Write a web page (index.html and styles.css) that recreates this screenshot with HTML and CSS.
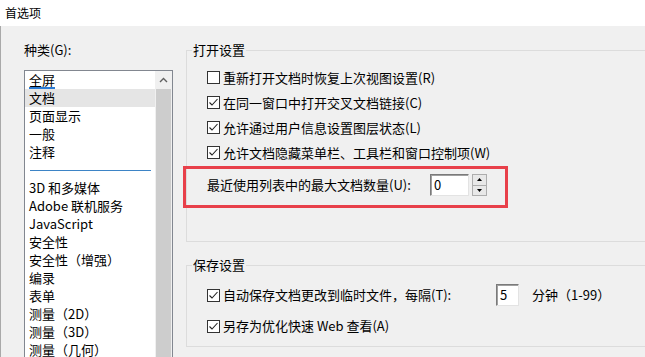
FILE: index.html
```html
<!DOCTYPE html>
<html lang="zh-CN">
<head>
    <meta charset="UTF-8">
    <meta name="viewport" content="width=device-width, initial-scale=1.0">
    <title>首选项</title>
    <link rel="stylesheet" href="styles.css">
</head>
<body>
    <div class="title-bar">首选项</div>
    <div class="dialog">
        <div class="sidebar">
            <div class="caption">种类(G):</div>
            <div class="listbox">
                <ul class="items">
                    <li><span class="focus">全屏</span></li>
                    <li class="selected">文档</li>
                    <li>页面显示</li>
                    <li>一般</li>
                    <li>注释</li>
                    <li class="separator"></li>
                    <li>3D 和多媒体</li>
                    <li>Adobe 联机服务</li>
                    <li>JavaScript</li>
                    <li>安全性</li>
                    <li>安全性（增强）</li>
                    <li>编录</li>
                    <li>表单</li>
                    <li>测量（2D）</li>
                    <li>测量（3D）</li>
                    <li>测量（几何）</li>
                </ul>
                <div class="scrollbar">
                    <div class="scroll-up">
                        <svg width="9" height="6" viewBox="0 0 9 6"><path d="M1 5 L4.5 1.5 L8 5" fill="none" stroke="#606060" stroke-width="1.4"/></svg>
                    </div>
                    <div class="scroll-thumb"></div>
                </div>
            </div>
        </div>

        <div class="main">
            <fieldset class="group group-open">
                <legend>打开设置</legend>
                <div class="check-row">
                    <span class="checkbox"></span>重新打开文档时恢复上次视图设置(R)
                </div>
                <div class="check-row">
                    <span class="checkbox"><svg width="11" height="11" viewBox="0 0 11 11"><path d="M1.5 5.5 L4 8 L9.5 2" fill="none" stroke="#222" stroke-width="1.1"/></svg></span>在同一窗口中打开交叉文档链接(C)
                </div>
                <div class="check-row">
                    <span class="checkbox"><svg width="11" height="11" viewBox="0 0 11 11"><path d="M1.5 5.5 L4 8 L9.5 2" fill="none" stroke="#222" stroke-width="1.1"/></svg></span>允许通过用户信息设置图层状态(L)
                </div>
                <div class="check-row">
                    <span class="checkbox"><svg width="11" height="11" viewBox="0 0 11 11"><path d="M1.5 5.5 L4 8 L9.5 2" fill="none" stroke="#222" stroke-width="1.1"/></svg></span>允许文档隐藏菜单栏、工具栏和窗口控制项(W)
                </div>
                <div class="spin-row">
                    <span class="spin-label">最近使用列表中的最大文档数量(U):</span>
                    <span class="textbox">0</span>
                    <span class="spinner">
                        <span class="spin-btn"><svg width="5" height="3" viewBox="0 0 5 3"><path d="M0 3 L2.5 0 L5 3 Z" fill="#000"/></svg></span>
                        <span class="spin-btn"><svg width="5" height="3" viewBox="0 0 5 3"><path d="M0 0 L2.5 3 L5 0 Z" fill="#000"/></svg></span>
                    </span>
                    <div class="highlight"></div>
                </div>
            </fieldset>

            <fieldset class="group group-save">
                <legend>保存设置</legend>
                <div class="check-row">
                    <span class="checkbox"><svg width="11" height="11" viewBox="0 0 11 11"><path d="M1.5 5.5 L4 8 L9.5 2" fill="none" stroke="#222" stroke-width="1.1"/></svg></span>
                    <span class="interval-label">自动保存文档更改到临时文件，每隔(T):</span>
                    <span class="textbox small">5</span>
                    <span class="unit">分钟（1-99）</span>
                </div>
                <div class="check-row">
                    <span class="checkbox"><svg width="11" height="11" viewBox="0 0 11 11"><path d="M1.5 5.5 L4 8 L9.5 2" fill="none" stroke="#222" stroke-width="1.1"/></svg></span>另存为优化快速 Web 查看(A)
                </div>
            </fieldset>
        </div>
    </div>
</body>
</html>
```

FILE: styles.css
```css
body {
    margin: 0;
    width: 645px;
    height: 357px;
    overflow: hidden;
    background-color: #f0f0f0;
    font-family: "Noto Sans CJK SC", "Microsoft YaHei", sans-serif;
    font-size: 13px;
    line-height: 18px;
    color: #000;
}

.title-bar {
    height: 26px;
    padding-left: 5px;
    background-color: #fff;
    font-size: 12px;
    line-height: 26px;
}

.dialog {
    display: flex;
    height: 331px;
    box-sizing: border-box;
    overflow: hidden;
    padding: 15px 0 0 23px;
    border-left: 1px solid #a9a9a9;
}

/* category list */
.sidebar {
    width: 149px;
    flex-shrink: 0;
}

.caption {
    margin-bottom: 11px;
}

.listbox {
    display: flex;
    height: 288px;
    overflow: hidden;
    border: 1px solid #828790;
    border-bottom: none;
    background-color: #fff;
}

.items {
    list-style: none;
    margin: 0;
    padding: 0;
    width: 130px;
}

.items li {
    height: 18px;
    padding-left: 4px;
    white-space: nowrap;
}

.items li.selected {
    background-color: #e5e5e5;
}

.focus {
    display: inline-block;
    height: 16px;
    border-bottom: 2px solid #2a7bd4;
}

.items li.separator {
    box-sizing: border-box;
    padding: 9px 4px 0 5px;
}

.separator::after {
    content: "";
    display: block;
    border-top: 1px solid #3d84c6;
}

.scrollbar {
    width: 17px;
    display: flex;
    flex-direction: column;
    align-items: center;
    background-color: #f0f0f0;
}

.scroll-up {
    height: 18px;
    display: flex;
    align-items: center;
    justify-content: center;
}

.scroll-thumb {
    flex: 1;
    width: 15px;
    background-color: #cdcdcd;
}

/* settings */
.main {
    flex: 1;
    min-width: 0;
    padding-left: 13px;
}

.group {
    margin: 0;
    width: 560px;
    box-sizing: border-box;
    padding: 6px 0 0 5px;
    border: 1px solid #dcdcdc;
}

.group legend {
    padding: 0 1px;
}

.group-open {
    height: 201px;
}

.group-save {
    height: 91px;
    margin-top: 14px;
    padding-top: 8px;
}

.check-row {
    display: flex;
    align-items: center;
    height: 25px;
    padding-left: 15px;
    white-space: nowrap;
}

.group-save .check-row {
    height: 26px;
}

.group-save .check-row + .check-row {
    margin-top: 5px;
}

.checkbox {
    width: 13px;
    height: 13px;
    box-sizing: border-box;
    margin-right: 3px;
    flex-shrink: 0;
    border: 1px solid #333;
    background-color: #fff;
}

.checkbox svg {
    display: block;
}

.spin-row {
    position: relative;
    display: flex;
    align-items: center;
    height: 24px;
    margin: 8px 0 0 15px;
}

.spin-label {
    width: 223px;
}

.textbox {
    width: 39px;
    height: 22px;
    box-sizing: border-box;
    padding-left: 3px;
    line-height: 20px;
    background-color: #fff;
    border: 1px solid;
    border-color: #7a7a7a #e3e3e3 #e3e3e3 #7a7a7a;
    box-shadow: inset 1px 1px 0 #a0a0a0;
}

.textbox.small {
    width: 23px;
}

.interval-label {
    width: 273px;
}

.unit {
    margin-left: 13px;
}

.spinner {
    display: flex;
    flex-direction: column;
    width: 15px;
    height: 22px;
    margin-left: 3px;
}

.spin-btn {
    flex: 1;
    display: flex;
    align-items: center;
    justify-content: center;
    border: 1px solid #adadad;
    background-color: #e8e8e8;
}

.spin-btn + .spin-btn {
    border-top: none;
}

.highlight {
    position: absolute;
    left: -24px;
    top: -7px;
    width: 325px;
    height: 42px;
    box-sizing: border-box;
    border: 3px solid #e8404a;
}
```
